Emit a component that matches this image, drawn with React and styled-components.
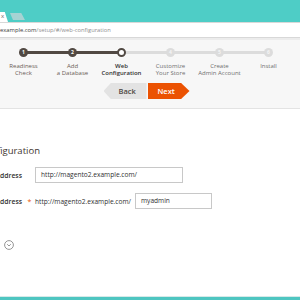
import styled, { createGlobalStyle } from "styled-components";

const GlobalStyle = createGlobalStyle`
  html, body {
    margin: 0;
    padding: 0;
    background: #fff;
  }
  body {
    font-family: "Open Sans", "DejaVu Sans", sans-serif;
    width: 300px;
    height: 300px;
    overflow: hidden;
  }
`;

const Page = styled.div`
  display: flex;
  flex-direction: column;
  height: 300px;
  overflow: hidden;
`;

const TabStrip = styled.div`
  height: 22px;
  background: #4ecdc6;
  display: flex;
  align-items: flex-end;
  gap: 2px;
`;

const ActiveTab = styled.div`
  width: 8px;
  height: 10px;
  background: #fff;
  clip-path: polygon(0 0, 60% 0, 100% 100%, 0 100%);
  color: #666;
  font-size: 6px;
  line-height: 9px;
  padding-left: 1px;
  box-sizing: border-box;
`;

const GhostTab = styled.div`
  width: 15px;
  height: 7px;
  margin-bottom: 2px;
  background: #a6d3d3;
  clip-path: polygon(0 0, 75% 0, 100% 100%, 20% 100%);
`;

const AddressBar = styled.div`
  height: 14px;
  background: #fff;
  border-top: 1px solid #d8d8d8;
  border-bottom: 1px solid #d8d8d8;
  font-size: 5.8px;
  line-height: 14px;
  color: #8f8f8f;
  white-space: nowrap;
`;

const Host = styled.span`
  color: #3a3a3a;
`;

const Gutter = styled.div`
  height: 2px;
  background: #ececec;
`;

const Progress = styled.div`
  background: #f7f7f7;
  border-bottom: 1px solid #e3e3e3;
  padding: 8px 0 9px;
`;

const Steps = styled.div`
  display: grid;
  grid-template-columns: repeat(6, 49px);
  margin-left: -1px;
`;

const Step = styled.div`
  position: relative;
  display: flex;
  flex-direction: column;
  align-items: center;

  &::before {
    content: "";
    display: ${(p) => (p.$last ? "none" : "block")};
    position: absolute;
    left: 50%;
    top: 3px;
    width: 49px;
    height: 3px;
    background: ${(p) => (p.$lineDone ? "#514943" : "#dcdcdc")};
  }
`;

const Dot = styled.div`
  position: relative;
  z-index: 1;
  box-sizing: border-box;
  width: 9px;
  height: 9px;
  border-radius: 50%;
  font-size: 5px;
  line-height: 9px;
  text-align: center;
  font-weight: 700;
  ${(p) =>
    p.$state === "done"
      ? "background: #514943; color: #fff;"
      : p.$state === "current"
      ? "background: #fff; border: 2px solid #514943; color: transparent;"
      : "background: #dcdcdc; color: #f4f4f4;"}
`;

const StepLabel = styled.div`
  margin-top: 6px;
  font-size: 6px;
  line-height: 7px;
  text-align: center;
  white-space: nowrap;
  color: ${(p) => (p.$current ? "#303030" : p.$done ? "#6b5d55" : "#6f6f6f")};
  font-weight: ${(p) => (p.$current ? 600 : 400)};
`;

const Nav = styled.div`
  display: flex;
  justify-content: center;
  gap: 1px;
  margin-top: 6px;
  padding-right: 7px;
`;

const NavButton = styled.div`
  height: 16px;
  display: flex;
  align-items: center;
  font-size: 7.5px;
  font-weight: 600;
  box-sizing: border-box;
  ${(p) =>
    p.$primary
      ? `
    width: 42px;
    padding-left: 10px;
    background: #eb5202;
    color: #fff;
    clip-path: polygon(0 0, 80% 0, 100% 50%, 80% 100%, 0 100%);
  `
      : `
    width: 43px;
    padding-left: 15px;
    background: #e3e3e3;
    color: #514943;
    clip-path: polygon(17% 0, 100% 0, 100% 100%, 17% 100%, 0 50%);
  `}
`;

const Form = styled.div`
  flex: 1;
  padding-top: 35px;
`;

const Title = styled.h2`
  margin: 0 0 9px -43px;
  font-size: 9.5px;
  font-weight: 400;
  line-height: 14px;
  color: #41362f;
  white-space: nowrap;
`;

const Rows = styled.div`
  display: flex;
  flex-direction: column;
  gap: 10px;
`;

const Row = styled.div`
  display: grid;
  grid-template-columns: 22px 13px 1fr;
  align-items: center;
  height: 16px;
`;

const Label = styled.div`
  display: flex;
  justify-content: flex-end;
  white-space: nowrap;
  font-size: 6.8px;
  font-weight: 600;
  color: #303030;
`;

const Required = styled.span`
  color: #eb5202;
  font-size: 7px;
  text-align: center;
  padding-left: 2px;
`;

const Field = styled.div`
  display: flex;
  align-items: center;
  gap: 4px;
`;

const Prefix = styled.span`
  font-size: 6.6px;
  color: #303030;
  white-space: nowrap;
`;

const Input = styled.div`
  box-sizing: border-box;
  width: ${(p) => p.$w}px;
  height: 16px;
  border: 1px solid #c8c8c8;
  background: #fff;
  padding-left: 5px;
  font-size: 6.6px;
  line-height: 14px;
  color: #303030;
  white-space: nowrap;
`;

const Advanced = styled.div`
  margin-top: 31px;
  padding-left: 4px;
  display: flex;
`;

const BottomBar = styled.div`
  height: 3px;
  background: #4ec6c1;
  border-top: 1px solid #d6e9e8;
`;

const steps = [
  ["Readiness", "Check"],
  ["Add", "a Database"],
  ["Web", "Configuration"],
  ["Customize", "Your Store"],
  ["Create", "Admin Account"],
  ["Install", ""],
];

export default function App() {
  return (
    <Page>
      <GlobalStyle />
      <TabStrip>
        <ActiveTab>x</ActiveTab>
        <GhostTab />
      </TabStrip>
      <AddressBar>
        <Host>example.com</Host>/setup/#/web-configuration
      </AddressBar>
      <Gutter />
      <Progress>
        <Steps>
          {steps.map((s, i) => {
            const state = i < 2 ? "done" : i === 2 ? "current" : "todo";
            return (
              <Step key={i} $last={i === 5} $lineDone={i < 2}>
                <Dot $state={state}>{i + 1}</Dot>
                <StepLabel $current={i === 2} $done={i < 2}>
                  {s[0]}
                  <br />
                  {s[1]}
                </StepLabel>
              </Step>
            );
          })}
        </Steps>
        <Nav>
          <NavButton>Back</NavButton>
          <NavButton $primary>Next</NavButton>
        </Nav>
      </Progress>
      <Form>
        <Title>Web Configuration</Title>
        <Rows>
          <Row>
            <Label>Your Store Address</Label>
            <span />
            <Field>
              <Input $w={148}>http://magento2.example.com/</Input>
            </Field>
          </Row>
          <Row>
            <Label>Magento Admin Address</Label>
            <Required>*</Required>
            <Field>
              <Prefix>http://magento2.example.com/</Prefix>
              <Input $w={77}>myadmin</Input>
            </Field>
          </Row>
        </Rows>
        <Advanced>
          <svg width="10" height="10" viewBox="0 0 10 10">
            <circle cx="5" cy="5" r="4.4" fill="none" stroke="#8a8a8a" strokeWidth="0.9" />
            <path d="M3.2 4.2 L5 6 L6.8 4.2" fill="none" stroke="#8a8a8a" strokeWidth="0.9" />
          </svg>
        </Advanced>
      </Form>
      <BottomBar />
    </Page>
  );
}
